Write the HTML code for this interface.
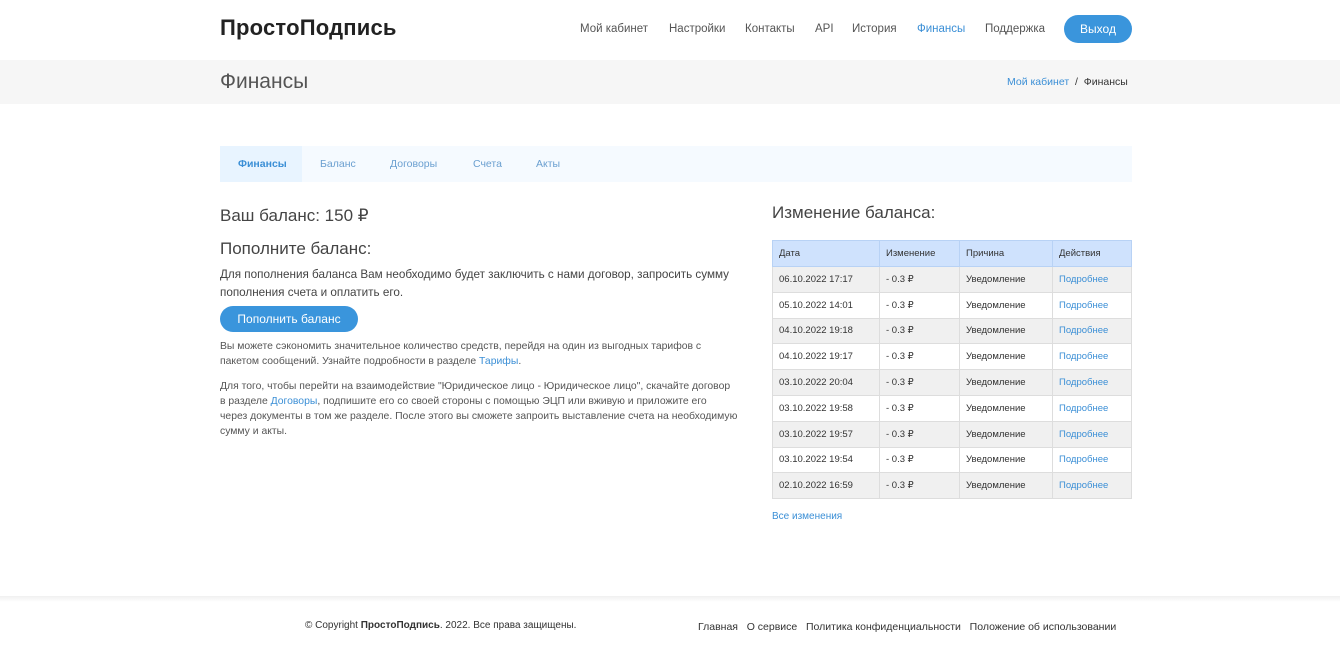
<!DOCTYPE html>
<html><head><meta charset="utf-8"><style>
*{margin:0;padding:0;box-sizing:border-box}
body{width:1340px;height:656px;background:#fff;font-family:"Liberation Sans","DejaVu Sans",sans-serif;color:#333;position:relative;overflow:hidden}
.a{position:absolute;white-space:nowrap}
a{color:#3b8fd6;text-decoration:none}
.n{position:absolute;top:23px;font-size:11.5px;color:#555}
table{border-collapse:collapse;font-size:9.5px;color:#333}
td{border:1px solid #ddd;height:25.8px;padding:0 6px}
th{background:#cfe2fd;border:1px solid #b8d2f5;height:26px;padding:0 6px;text-align:left;font-weight:normal}
tr.g td{background:#f0f0f0}
</style></head><body>
<div class="a" style="left:220px;top:15px;font-size:22px;font-weight:bold;color:#222;letter-spacing:0.2px">ПростоПодпись</div>
<div class="n" style="left:580px">Мой кабинет</div>
<div class="n" style="left:669px">Настройки</div>
<div class="n" style="left:745px">Контакты</div>
<div class="n" style="left:815px">API</div>
<div class="n" style="left:852px">История</div>
<div class="n" style="left:917px;color:#3b8fd6">Финансы</div>
<div class="n" style="left:985px">Поддержка</div>
<div class="a" style="left:1064px;top:15px;width:68px;height:28px;border-radius:14px;background:#3a95dc;color:#fff;font-size:12px;text-align:center;line-height:28px">Выход</div>
<div class="a" style="left:0;top:60px;width:1340px;height:44px;background:#f6f6f6"></div>
<div class="a" style="left:220px;top:70px;font-size:21px;color:#555">Финансы</div>
<div class="a" style="left:1007px;top:76px;font-size:10.5px;color:#333"><a>Мой кабинет</a>&nbsp; / &nbsp;Финансы</div>
<div class="a" style="left:220px;top:146px;width:912px;height:36px;background:#f5faff"></div>
<div class="a" style="left:220px;top:146px;width:82px;height:36px;background:#e8f4ff"></div>
<div class="a" style="left:238px;top:158px;font-size:10.5px;font-weight:bold;color:#3b8fd6">Финансы</div>
<div class="a" style="left:320px;top:158px;font-size:10.5px;color:#6a9fd0">Баланс</div>
<div class="a" style="left:390px;top:158px;font-size:10.5px;color:#6a9fd0">Договоры</div>
<div class="a" style="left:473px;top:158px;font-size:10.5px;color:#6a9fd0">Счета</div>
<div class="a" style="left:536px;top:158px;font-size:10.5px;color:#6a9fd0">Акты</div>
<div class="a" style="left:220px;top:206px;font-size:17px;color:#444">Ваш баланс: 150 ₽</div>
<div class="a" style="left:220px;top:239px;font-size:17px;color:#444">Пополните баланс:</div>
<div class="a" style="left:220px;top:266px;font-size:11.7px;line-height:18px;color:#444">Для пополнения баланса Вам необходимо будет заключить с нами договор, запросить сумму<br>пополнения счета и оплатить его.</div>
<div class="a" style="left:220px;top:306px;width:138px;height:26px;border-radius:13px;background:#3a95dc;color:#fff;font-size:12px;text-align:center;line-height:26px">Пополнить баланс</div>
<div class="a" style="left:220px;top:339px;font-size:10.4px;line-height:15px;color:#555">Вы можете сэкономить значительное количество средств, перейдя на один из выгодных тарифов с<br>пакетом сообщений. Узнайте подробности в разделе <a>Тарифы</a>.</div>
<div class="a" style="left:220px;top:379px;font-size:10.4px;line-height:15px;color:#555">Для того, чтобы перейти на взаимодействие "Юридическое лицо - Юридическое лицо", скачайте договор<br>в разделе <a>Договоры</a>, подпишите его со своей стороны с помощью ЭЦП или вживую и приложите его<br>через документы в том же разделе. После этого вы сможете запроить выставление счета на необходимую<br>сумму и акты.</div>
<div class="a" style="left:772px;top:203px;font-size:17px;color:#444">Изменение баланса:</div>
<table class="a" style="left:772px;top:240px;width:360px">
<tr><th style="width:107px">Дата</th><th style="width:80px">Изменение</th><th style="width:93px">Причина</th><th>Действия</th></tr>
<tr class="g"><td>06.10.2022 17:17</td><td>- 0.3 ₽</td><td>Уведомление</td><td><a>Подробнее</a></td></tr>
<tr><td>05.10.2022 14:01</td><td>- 0.3 ₽</td><td>Уведомление</td><td><a>Подробнее</a></td></tr>
<tr class="g"><td>04.10.2022 19:18</td><td>- 0.3 ₽</td><td>Уведомление</td><td><a>Подробнее</a></td></tr>
<tr><td>04.10.2022 19:17</td><td>- 0.3 ₽</td><td>Уведомление</td><td><a>Подробнее</a></td></tr>
<tr class="g"><td>03.10.2022 20:04</td><td>- 0.3 ₽</td><td>Уведомление</td><td><a>Подробнее</a></td></tr>
<tr><td>03.10.2022 19:58</td><td>- 0.3 ₽</td><td>Уведомление</td><td><a>Подробнее</a></td></tr>
<tr class="g"><td>03.10.2022 19:57</td><td>- 0.3 ₽</td><td>Уведомление</td><td><a>Подробнее</a></td></tr>
<tr><td>03.10.2022 19:54</td><td>- 0.3 ₽</td><td>Уведомление</td><td><a>Подробнее</a></td></tr>
<tr class="g"><td>02.10.2022 16:59</td><td>- 0.3 ₽</td><td>Уведомление</td><td><a>Подробнее</a></td></tr>
</table>
<div class="a" style="left:772px;top:511px;font-size:10px"><a>Все изменения</a></div>
<div class="a" style="left:0;top:596px;width:1340px;height:6px;background:linear-gradient(#f0f0f0,#fff)"></div>
<div class="a" style="left:305px;top:620px;font-size:10px;color:#333">© Copyright <b>ПростоПодпись</b>. 2022. Все права защищены.</div>
<div class="a" style="left:698px;top:621px;font-size:10.5px;color:#333">Главная&nbsp;&nbsp;&nbsp;О сервисе&nbsp;&nbsp;&nbsp;Политика конфиденциальности&nbsp;&nbsp;&nbsp;Положение об использовании</div>
</body></html>
